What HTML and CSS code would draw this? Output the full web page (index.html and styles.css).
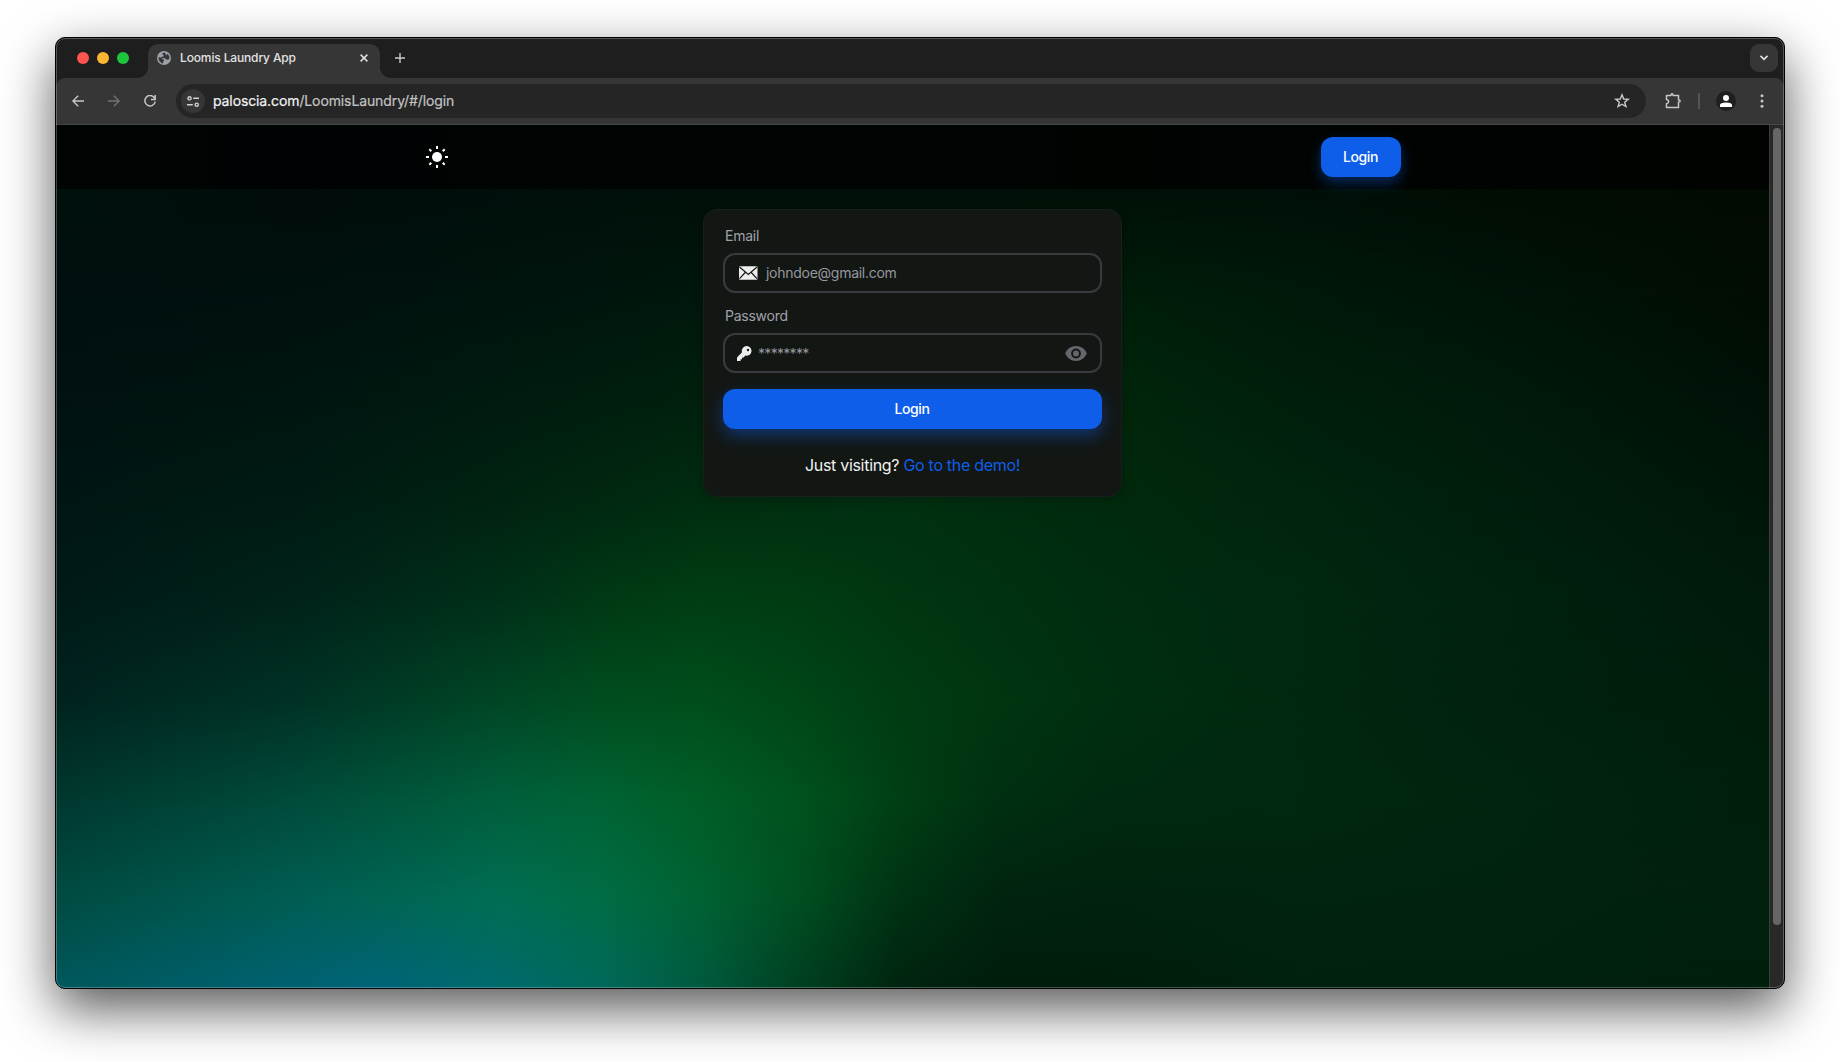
FILE: index.html
```html
<!DOCTYPE html>
<html lang="en">
<head>
<meta charset="utf-8">
<title>Loomis Laundry App</title>
<link rel="stylesheet" href="styles.css">
</head>
<body>
<div class="window">
  <div class="tabstrip">
    <div class="lights"><i class="red"></i><i class="yellow"></i><i class="green"></i></div>
    <div class="tab">
      <svg class="globe" width="14" height="14" viewBox="0 0 14 14"><circle cx="7" cy="7" r="7" fill="#9aa0a6"/><path d="M7 1.600C5.200 2 5 3.300 6.200 3.900C7.600 4.500 6.800 5.700 5.400 5.600C4.600 6.500 4 6.700 3 6.500L1.500 6.200C1.300 9 3.200 12 6 12.400C6.200 11.200 5.800 10.600 6.800 9.900C7.900 8.900 6.900 8.300 5.300 8.300C4.500 7.700 5.600 7 6.800 7.100C8 7 8.300 8.200 9.400 8.600C10.600 9 11.400 8.300 12.400 8C12.800 5.800 11.900 3.900 10.300 2.700C10.200 3.800 9.300 4.500 8.600 3.800C9.200 2.900 8 2.500 7 1.600Z" fill="#35363a"/></svg>
      <span class="tab-title">Loomis Laundry App</span>
      <svg class="close" width="8" height="8" viewBox="0 0 8 8"><path d="M.6.6l6.800 6.800M7.400.6L.6 7.400" stroke="#dfdfdf" stroke-width="1.500"/></svg>
    </div>
    <svg class="plus" width="10" height="10" viewBox="0 0 10 10"><path d="M5 0v10M0 5h10" stroke="#c7c7c7" stroke-width="1.400"/></svg>
    <div class="tab-search"><svg width="8" height="6" viewBox="0 0 8 6"><path d="M.5.800L4 4.300L7.500.800" fill="none" stroke="#e3e3e3" stroke-width="1.600"/></svg></div>
  </div>
  <div class="toolbar">
    <div class="arrows">
      <svg width="12" height="12" viewBox="0 0 12 12" fill="none" stroke="#c7c7c7" stroke-width="1.400"><path d="M12 6H1M6.200.700L.9 6l5.300 5.300"/></svg>
      <svg width="12" height="12" viewBox="0 0 12 12" fill="none" stroke="#747474" stroke-width="1.400"><path d="M0 6h11M5.800.700L11.100 6l-5.300 5.300"/></svg>
      <svg width="12" height="12" viewBox="0 0 12 12" fill="none" stroke="#c7c7c7" stroke-width="1.500"><path d="M10.600 3.200A5.200 5.200 0 1 0 11.200 6.600M11.200 0v4.400H6.900"/></svg>
    </div>
    <div class="omnibox">
      <span class="site"><svg width="12" height="11" viewBox="0 0 12 11" fill="none" stroke="#d0d0d0" stroke-width="1.400"><circle cx="2.500" cy="2.300" r="1.600"/><path d="M6.200 2.300H12M0 8.700h5.800"/><circle cx="9.700" cy="8.700" r="1.600"/></svg></span>
      <span class="url">paloscia.com<span>/LoomisLaundry/#/login</span></span>
      <svg class="star" width="16" height="16" viewBox="0 0 16 16" fill="none" stroke="#c7c7c7" stroke-width="1.400"><path d="M8 1.800l1.700 4.200 4.500.3-3.500 2.900 1.200 4.400L8 11.200l-3.900 2.400 1.200-4.400L1.800 6.300 6.300 6z"/></svg>
    </div>
    <svg class="puzzle" width="18" height="18" viewBox="0 0 18 18"><path d="M2.500 3.500H7Q7 1.800 8 1.800T9 3.500h5.500V8Q16.200 8 16.200 9T14.500 10.300v5.200h-12V11.700Q4.700 11.300 4.700 9.600T2.500 7.400z" fill="none" stroke="#c7c7c7" stroke-width="1.500" stroke-linejoin="round"/></svg>
    <i class="divider"></i>
    <svg class="avatar" width="20" height="20" viewBox="0 0 20 20"><circle cx="10" cy="10" r="10" fill="#1f1f1f"/><circle cx="10" cy="7" r="3" fill="#fff"/><path d="M4 16v-2q0-2.500 6-2.500t6 2.500v2z" fill="#fff"/></svg>
    <svg class="dots" width="4" height="14" viewBox="0 0 4 14" fill="#c7c7c7"><circle cx="2" cy="1.700" r="1.500"/><circle cx="2" cy="7" r="1.500"/><circle cx="2" cy="12.300" r="1.500"/></svg>
  </div>
  <div class="viewport">
    <div class="page">
      <div class="aurora"><i class="a0"></i><i class="a1"></i><i class="a2"></i><i class="a3"></i><i class="a4"></i><i class="a5"></i><i class="a6"></i><i class="a7"></i><i class="a8"></i></div>
      <nav class="nav">
        <svg width="22" height="22" viewBox="0 0 22 22"><circle cx="11" cy="11" r="5" fill="#fff"/><path d="M11 0v3M11 19v3M0 11h3M19 11h3M3.300 3.300l2 2M16.700 16.700l2 2M3.300 18.700l2-2M16.700 5.300l2-2" stroke="#fff" stroke-width="2"/></svg>
        <button class="btn">Login</button>
      </nav>
      <form class="card">
        <label>Email</label>
        <div class="field email">
          <svg width="20" height="14" viewBox="0 0 20 14"><rect x="1" y=".2" width="18.500" height="13.600" rx="1" fill="#ededed"/><path d="M1.500 1l8.800 7.500L19 1M1.500 12.700l5.700-6.200M19 12.700l-5.700-6.200" fill="none" stroke="#141615" stroke-width="1.200"/></svg>
          <span>johndoe@gmail.com</span>
        </div>
        <label>Password</label>
        <div class="field password">
          <svg width="15" height="15" viewBox="0 0 15 15"><path fill="#ededed" fill-rule="evenodd" d="M9.700 0a4.900 4.900 0 0 0-4.700 6.300L0 11.500V15h3.500v-1.700h1.600v-1.700h1.600l1.500-2A4.900 4.900 0 1 0 9.700 0zM11 2.800a1.200 1.200 0 1 1 0 2.400a1.200 1.200 0 0 1 0-2.400z"/></svg>
          <span>********</span>
          <svg class="eye" width="22" height="15" viewBox="0 0 22 15"><path fill="#66666e" fill-rule="evenodd" d="M11 0C6 0 2 3 .2 7.300C2 12 6 15 11 15s9-3 10.800-7.700C20 3 16 0 11 0zm0 2.600a4.900 4.900 0 1 1 0 9.800a4.900 4.900 0 0 1 0-9.800z"/><circle cx="11" cy="7.500" r="3" fill="#66666e"/></svg>
        </div>
        <button class="btn wide" type="button">Login</button>
        <p>Just visiting? <a>Go to the demo!</a></p>
      </form>
    </div>
    <div class="scrollbar"><i></i></div>
  </div>
  <div class="rim"></div>
</div>
</body>
</html>
```
FILE: styles.css
```css
* { box-sizing: border-box; }
html, body { height: 100%; overflow: hidden; }
body { margin: 0; padding: 37px 55px 73px; background: #fff; font-family: Inter, "Liberation Sans", sans-serif; }
svg { display: block; flex: none; }
.window { position: relative; display: flex; flex-direction: column; width: 1730px; height: 952px; border: 1px solid #000; border-radius: 10px; background: #1e1e1e; box-shadow: 0 20px 52px rgba(0,0,0,.66); overflow: hidden; }
.rim { position: absolute; inset: 0; border: 1px solid rgba(255,255,255,.25); border-radius: 9px; pointer-events: none; }

.tabstrip { display: flex; height: 40px; flex: none; padding: 6px 6px 0 21px; }
.lights { display: flex; gap: 8px; padding-top: 8px; width: 71px; }
.lights i { width: 12px; height: 12px; border-radius: 50%; }
.red { background: #ff5550; }
.yellow { background: #ffb52f; }
.green { background: #1dc43c; }
.tab { position: relative; display: flex; align-items: center; width: 232px; height: 34px; padding: 0 12px 6px 9px; border-radius: 10px 10px 0 0; background: #363636; }
.tab::before, .tab::after { content: ""; position: absolute; bottom: 0; width: 10px; height: 10px; }
.tab::before { left: -10px; background: radial-gradient(circle at 0 0, transparent 9.500px, #363636 10px); }
.tab::after { right: -10px; background: radial-gradient(circle at 100% 0, transparent 9.500px, #363636 10px); }
.tab-title { margin-left: 9px; padding-bottom: 2px; font-size: 12px; font-weight: 500; color: #e3e3e3; letter-spacing: -.14px; white-space: nowrap; }
.close { margin-left: auto; }
.plus { margin: 9px 0 0 15px; }
.tab-search { display: flex; align-items: center; justify-content: center; width: 28px; height: 28px; margin-left: auto; border-radius: 9px; background: #363636; }

.toolbar { display: flex; align-items: center; height: 47px; flex: none; padding: 0 20px 0 16px; border-bottom: 1px solid #464646; border-radius: 9px 9px 0 0; background: #363636; }
.arrows { display: flex; gap: 24px; width: 104px; }
.omnibox { display: flex; align-items: center; width: 1470px; height: 34px; padding: 0 16px 0 5px; border-radius: 17px; background: #252525; }
.site { display: flex; align-items: center; justify-content: center; width: 24px; height: 24px; border-radius: 50%; background: #363636; }
.url { margin-left: 8px; padding-bottom: 2px; font-size: 14px; color: #f1f1f1; letter-spacing: -.11px; -webkit-text-stroke: .2px; }
.url span { color: #c2c2c2; }
.star { margin-left: auto; }
.puzzle { margin-left: 18px; }
.divider { width: 2px; height: 16px; margin-left: 16px; background: #545454; }
.avatar { margin-left: 16px; }
.dots { margin-left: auto; }

.viewport { display: flex; flex: 1; min-height: 0; }
.page { position: relative; flex: 1; background: #001009; }

/* Backdrop: each band fades into the next one down, so the hues blend both ways. */
.aurora { position: absolute; inset: 0; }
.aurora i { --fade: 100px; position: absolute; left: 0; right: 0; bottom: 0; -webkit-mask-image: linear-gradient(transparent, #000 var(--fade)); mask-image: linear-gradient(transparent, #000 var(--fade)); }
.aurora .a0 { --fade: 0px; top: 0; background: linear-gradient(90deg, #00110d, #020d0b 14.200%, #000f0b 25.900%, #001009 37.600%, #001009 49.300%, #001007 61%, #001008 72.600%, #020d04 84.300%, #030b02); }
.aurora .a1 { --fade: 111px; top: 64px; background: linear-gradient(90deg, #000f0f, #00110f 14.200%, #00140e 25.900%, #00180d 37.600%, #001c0c 49.300%, #001f0a 61%, #00190a 72.600%, #001409 84.300%, #020d03); }
.aurora .a2 { top: 175px; background: linear-gradient(90deg, #001211, #001511 14.200%, #001b10 25.900%, #00210d 37.600%, #00260c 49.300%, #00270b 61%, #001f0c 72.600%, #001a0b 84.300%, #001108); }
.aurora .a3 { top: 275px; background: linear-gradient(90deg, #001614, #001b14 14.200%, #002311 25.900%, #002d10 37.600%, #003011 49.300%, #002a0d 61%, #00250e 72.600%, #001e0d 84.300%, #00160a); }
.aurora .a4 { top: 375px; background: linear-gradient(90deg, #001a18, #00231a 14.200%, #003019 25.900%, #003915 31.800%, #003e14 37.600%, #003c13 43.500%, #003612 49.300%, #002d10 61%, #002810 72.600%, #00220f 84.300%, #001a0c); }
.aurora .a5 { top: 475px; background: linear-gradient(90deg, #00231f, #003226 14.200%, #004625 25.900%, #004d20 31.800%, #004e1b 37.600%, #004617 43.500%, #003c13 49.300%, #002f10 61%, #00280f 72.600%, #00220f 84.300%, #001d0c); }
.aurora .a6 { top: 575px; background: linear-gradient(90deg, #00382f, #004c3b 14.200%, #005f3c 25.900%, #006334 31.800%, #005e27 37.600%, #00521d 43.500%, #003f15 49.300%, #003011 55%, #002a10 61%, #002810 72.600%, #00250f 84.300%, #001f0d); }
.aurora .a7 { top: 675px; background: linear-gradient(90deg, #004c43, #005e54 14.200%, #006e54 25.900%, #006d45 31.800%, #006233 37.600%, #004e21 43.500%, #003213 49.300%, #00240f 55%, #00220e 61%, #00240f 72.600%, #00230f 84.300%, #02200e); }
.aurora .a8 { --fade: 88px; top: 775px; background: linear-gradient(90deg, #00585c, #006272 14.200%, #006478 19%, #006a6d 25.900%, #00695b 31.800%, #005a3f 37.600%, #003f20 43.500%, #00240f 49.300%, #001d0c 55%, #001d0c 61%, #00210e 72.600%, #00210e 84.300%, #001f0d); }

.nav { position: relative; display: flex; align-items: center; justify-content: space-between; height: 64px; padding: 0 368px 0 370px; background: rgba(0,0,0,.72); }
.btn { width: 80px; height: 40px; padding: 0 1px 0 0; border: 0; border-radius: 12px; background: #0e5ee9; color: #fff; font: 500 14px/20px Inter, sans-serif; letter-spacing: -.4px; box-shadow: 0 6px 14px rgba(14,94,233,.4); }
.card { position: relative; display: flex; flex-direction: column; width: 419px; height: 288px; margin: 20px 0 0 647px; padding: 16px 19px 0 19px; border: 1px solid #1b1f1c; border-radius: 14px; background: #131714; box-shadow: 0 2px 12px rgba(0,0,0,.25); }
.card label { height: 20px; margin: 0 0 7px 2px; font-size: 14px; line-height: 20px; color: #a1a1aa; letter-spacing: -.25px; }
.field { display: flex; align-items: center; height: 40px; margin-bottom: 13px; padding: 0 13px; border: 2px solid #3a3a3e; border-radius: 12px; font-size: 14px; color: #96969f; }
.email span { margin-left: 8px; padding-bottom: 2px; letter-spacing: -.27px; }
.password { margin-bottom: 16px; padding: 0 13px 0 12px; }
.password span { margin-left: 6px; letter-spacing: -.7px; }
.eye { margin-left: auto; }
.wide { width: 100%; flex: none; box-shadow: 0 7px 16px rgba(14,94,233,.42); }
.card p { margin: 24px 0 0; text-align: center; font-size: 16px; line-height: 24px; color: #f1f1f1; letter-spacing: -.3px; }
.card a { color: #0e5ee9; }

.scrollbar { width: 15px; padding: 3px 0 0 3px; border-left: 1px solid #3c3c3c; background: #282828; }
.scrollbar i { display: block; width: 8px; height: 797px; border-radius: 4px; background: #666; }
```
